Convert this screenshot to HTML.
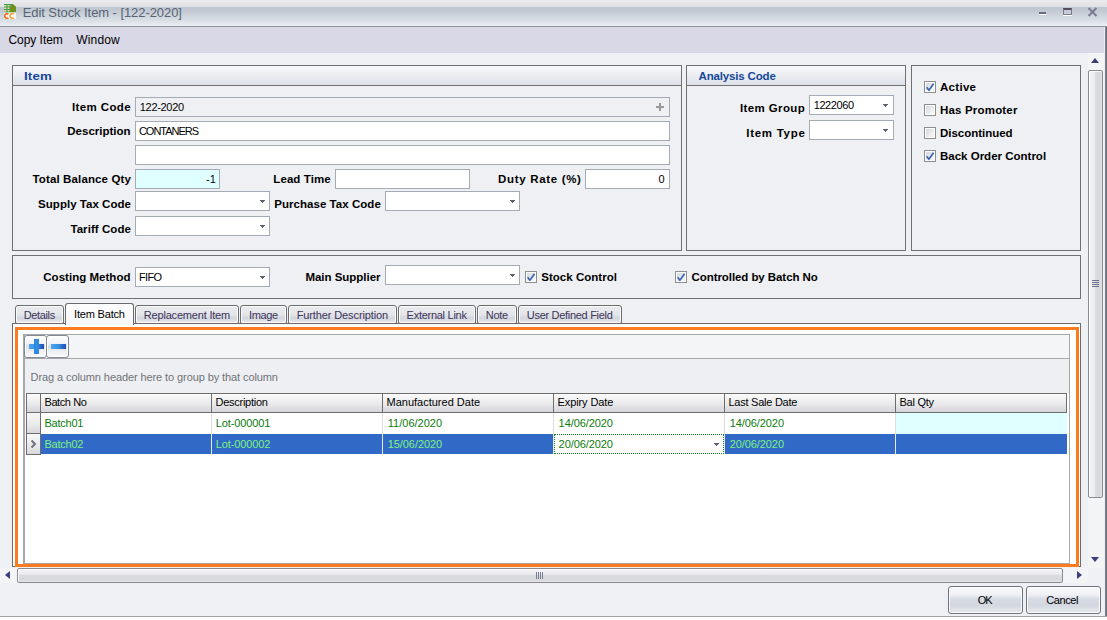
<!DOCTYPE html>
<html><head><meta charset="utf-8">
<style>
*{margin:0;padding:0;box-sizing:border-box}
html,body{width:1107px;height:620px;overflow:hidden;background:#eff0f3;font-family:"Liberation Sans",sans-serif;font-size:11px;color:#000}
.a{position:absolute}
.t{position:absolute;white-space:nowrap;line-height:20px;height:20px}
.grp{position:absolute;border:1px solid #707070;background:#eff0f3}
.gh{position:absolute;left:0;right:0;top:0;height:20px;border-bottom:1px solid #707070;background:linear-gradient(#f8f9fa,#dde1e8)}
.tb{position:absolute;border:1px solid #a4abb4;background:#fff;height:20px}
.dd{position:absolute;width:5px;height:3px}
.cb{position:absolute;width:12px;height:12px;border:1px solid #8e8e8e;background:#fff}
.cb::before{content:"";position:absolute;left:1px;top:1px;width:8px;height:8px;background:linear-gradient(135deg,#d3d8e0,#eef0f2 70%,#f6f6f6)}
.tab{position:absolute;top:305px;height:19px;border:1px solid #6c6c6c;border-radius:3px 3px 2px 2px;box-shadow:inset 0 0 0 1px #fbfbfc;background:linear-gradient(#e9ebee 0%,#e4e6ea 50%,#d2d6de 72%,#e0e2e6 88%,#ececee 100%)}
.tab.sel{top:303px;height:22px;border-bottom:none;border-radius:3px 3px 0 0;box-shadow:none;background:linear-gradient(#fdfdfd,#f6f7f8);z-index:3;border-color:#6c6c6c}
.btn{position:absolute;top:586px;width:75px;height:28px;border:1px solid #6f7380;border-radius:3px;box-shadow:inset 0 0 0 1px rgba(255,255,255,.8);background:linear-gradient(#fafbfc 0%,#eef0f4 30%,#d8dde5 45%,#d3d8e0 70%,#e6e9ee 100%)}
</style></head>
<body>
<div class="a" style="left:0;top:0;width:1107px;height:27px;background:linear-gradient(#e9eaed 0px,#e5e7ea 3px,#dfe1e4 6.5px,#bec6cf 7px,#c3cad3 11px,#cdd3db 15px,#d6dbe2 19px,#dfe3e9 22px,#e9edf3 25px,#eaeef4 26px);border-bottom:1px solid #8d9299"></div>
<svg class="a" style="left:4px;top:4px" width="12" height="15" viewBox="0 0 12 15"><path d="M0 0H9L12 3V15H0Z" fill="#e8d9b0"/><path d="M0 0.5H9M0 3H12M0 5.5H12M0 8H12M3 0V9M6 0V9" stroke="#3f9a4a" stroke-width="1"/><path d="M8 0H9L12 3V8H6V3Z" fill="#6f8f20"/><rect x="0" y="8.5" width="12" height="6.5" fill="#fff"/><path d="M4.5 10.2A2.3 2.3 0 1 0 4.5 13.8" fill="none" stroke="#f06818" stroke-width="1.6"/><path d="M9.8 10.2A2.3 2.3 0 1 0 9.8 13.8" fill="none" stroke="#f0a030" stroke-width="1.6"/></svg>
<div class="t" style="left:22.70px;top:3px;font-size:13px;letter-spacing:-0.069px;color:#586474;">Edit Stock Item - [122-2020]</div>
<div class="a" style="left:1039px;top:12px;width:7px;height:2px;background:#6a6a80;box-shadow:0 1px 0 #fff"></div>
<div class="a" style="left:1063px;top:8px;width:9px;height:7px;border:1px solid #7a7a90;border-top:2px solid #5a4a60;box-shadow:0 1px 0 #fff"></div>
<div class="a" style="left:1087px;top:7px;width:11px;height:10px"><svg width="11" height="10" viewBox="0 0 11 10"><path d="M1.5 1L9.5 9M9.5 1L1.5 9" stroke="#7a7a90" stroke-width="2"/></svg></div>
<div class="a" style="left:0;top:27px;width:1107px;height:26px;background:#d9d8e6"></div>
<div class="t" style="left:8.50px;top:30px;font-size:12px;letter-spacing:-0.050px;">Copy Item</div>
<div class="t" style="left:76.30px;top:30px;font-size:12px;letter-spacing:0.160px;">Window</div>
<div class="grp" style="left:12px;top:65px;width:670px;height:186px"><div class="gh"></div></div>
<div class="grp" style="left:686px;top:65px;width:220px;height:186px"><div class="gh"></div></div>
<div class="grp" style="left:911px;top:65px;width:170px;height:186px"></div>
<div class="grp" style="left:12px;top:255px;width:1069px;height:44px"></div>
<div class="t" style="left:24.10px;top:66px;font-size:11.5px;font-weight:bold;color:#16479a;transform:scaleX(1.16);transform-origin:0 0;letter-spacing:0.1px;">Item</div>
<div class="t" style="left:698.50px;top:66px;font-size:11.5px;font-weight:bold;letter-spacing:-0.163px;color:#16479a;">Analysis Code</div>
<div class="t" style="left:72.00px;top:97px;font-size:11.5px;font-weight:bold;letter-spacing:0.375px;">Item Code</div>
<div class="tb" style="left:135px;top:97px;width:535px;background:#eff0f3"></div>
<div class="t" style="left:139.80px;top:97px;font-size:11px;letter-spacing:-0.314px;">122-2020</div>
<div class="a" style="left:656px;top:103px;width:8px;height:2px;top:106px;background:#999"></div><div class="a" style="left:659px;top:103px;width:2px;height:8px;background:#999"></div>
<div class="t" style="left:67.30px;top:121px;font-size:11.5px;font-weight:bold;">Description</div>
<div class="tb" style="left:135px;top:121px;width:535px"></div>
<div class="t" style="left:138.90px;top:121px;font-size:11px;letter-spacing:-1.006px;">CONTANERS</div>
<div class="tb" style="left:135px;top:145px;width:535px"></div>
<div class="t" style="left:32.50px;top:169px;font-size:11.5px;font-weight:bold;letter-spacing:0.131px;">Total Balance Qty</div>
<div class="tb" style="left:135px;top:169px;width:85px;background:#e0ffff"></div>
<div class="t" style="left:206.00px;top:169px;font-size:11px;">-1</div>
<div class="t" style="left:273.30px;top:169px;font-size:11.5px;font-weight:bold;letter-spacing:0.081px;">Lead Time</div>
<div class="tb" style="left:335px;top:169px;width:135px"></div>
<div class="t" style="left:498.10px;top:169px;font-size:11.5px;font-weight:bold;letter-spacing:0.671px;">Duty Rate (%)</div>
<div class="tb" style="left:585px;top:169px;width:85px"></div>
<div class="t" style="left:658.60px;top:169px;font-size:11px;">0</div>
<div class="t" style="left:38.10px;top:194px;font-size:11.5px;font-weight:bold;letter-spacing:0.025px;">Supply Tax Code</div>
<div class="tb" style="left:135px;top:191px;width:135px"></div><svg class="a dd" style="left:260px;top:200px" width="5" height="3" shape-rendering="crispEdges"><path d="M0 0h5v1h-1v1h-1v1h-1v-1h-1v-1h-1z" fill="#5f6072"/></svg>
<div class="t" style="left:274.20px;top:194px;font-size:11.5px;font-weight:bold;letter-spacing:0.044px;">Purchase Tax Code</div>
<div class="tb" style="left:385px;top:191px;width:135px"></div><svg class="a dd" style="left:510px;top:200px" width="5" height="3" shape-rendering="crispEdges"><path d="M0 0h5v1h-1v1h-1v1h-1v-1h-1v-1h-1z" fill="#5f6072"/></svg>
<div class="t" style="left:70.40px;top:219px;font-size:11.5px;font-weight:bold;letter-spacing:0.065px;">Tariff Code</div>
<div class="tb" style="left:135px;top:216px;width:135px"></div><svg class="a dd" style="left:260px;top:225px" width="5" height="3" shape-rendering="crispEdges"><path d="M0 0h5v1h-1v1h-1v1h-1v-1h-1v-1h-1z" fill="#5f6072"/></svg>
<div class="t" style="left:740.00px;top:98px;font-size:11.5px;font-weight:bold;letter-spacing:0.383px;">Item Group</div>
<div class="tb" style="left:809px;top:95px;width:85px"></div><svg class="a dd" style="left:883px;top:104px" width="5" height="3" shape-rendering="crispEdges"><path d="M0 0h5v1h-1v1h-1v1h-1v-1h-1v-1h-1z" fill="#5f6072"/></svg>
<div class="t" style="left:813.70px;top:95px;font-size:11px;letter-spacing:-0.408px;">1222060</div>
<div class="t" style="left:746.30px;top:123px;font-size:11.5px;font-weight:bold;letter-spacing:0.706px;">Item Type</div>
<div class="tb" style="left:809px;top:120px;width:85px"></div><svg class="a dd" style="left:883px;top:129px" width="5" height="3" shape-rendering="crispEdges"><path d="M0 0h5v1h-1v1h-1v1h-1v-1h-1v-1h-1z" fill="#5f6072"/></svg>
<div class="cb" style="left:924px;top:81px"></div><svg class="a" style="left:925px;top:82px" width="10" height="10"><path d="M1.6 5.2L3.9 8.2L8.6 1.8" fill="none" stroke="#3a62b0" stroke-width="1.7"/></svg>
<div class="t" style="left:940.00px;top:77px;font-size:11.5px;font-weight:bold;letter-spacing:0.300px;">Active</div>
<div class="cb" style="left:924px;top:104px"></div>
<div class="t" style="left:940.00px;top:100px;font-size:11.5px;font-weight:bold;letter-spacing:0.182px;">Has Promoter</div>
<div class="cb" style="left:924px;top:127px"></div>
<div class="t" style="left:940.00px;top:123px;font-size:11.5px;font-weight:bold;letter-spacing:-0.023px;">Discontinued</div>
<div class="cb" style="left:924px;top:150px"></div><svg class="a" style="left:925px;top:151px" width="10" height="10"><path d="M1.6 5.2L3.9 8.2L8.6 1.8" fill="none" stroke="#3a62b0" stroke-width="1.7"/></svg>
<div class="t" style="left:940.00px;top:146px;font-size:11.5px;font-weight:bold;">Back Order Control</div>
<div class="t" style="left:43.30px;top:267px;font-size:11.5px;font-weight:bold;letter-spacing:0.023px;">Costing Method</div>
<div class="tb" style="left:135px;top:267px;width:135px"></div><svg class="a dd" style="left:260px;top:276px" width="5" height="3" shape-rendering="crispEdges"><path d="M0 0h5v1h-1v1h-1v1h-1v-1h-1v-1h-1z" fill="#5f6072"/></svg>
<div class="t" style="left:138.90px;top:267px;font-size:11px;letter-spacing:-0.617px;">FIFO</div>
<div class="t" style="left:305.40px;top:267px;font-size:11.5px;font-weight:bold;letter-spacing:-0.017px;">Main Supplier</div>
<div class="tb" style="left:385px;top:265px;width:135px"></div><svg class="a dd" style="left:510px;top:274px" width="5" height="3" shape-rendering="crispEdges"><path d="M0 0h5v1h-1v1h-1v1h-1v-1h-1v-1h-1z" fill="#5f6072"/></svg>
<div class="cb" style="left:525px;top:271px"></div><svg class="a" style="left:526px;top:272px" width="10" height="10"><path d="M1.6 5.2L3.9 8.2L8.6 1.8" fill="none" stroke="#3a62b0" stroke-width="1.7"/></svg>
<div class="t" style="left:541.20px;top:267px;font-size:11.5px;font-weight:bold;letter-spacing:0.033px;">Stock Control</div>
<div class="cb" style="left:675px;top:271px"></div><svg class="a" style="left:676px;top:272px" width="10" height="10"><path d="M1.6 5.2L3.9 8.2L8.6 1.8" fill="none" stroke="#3a62b0" stroke-width="1.7"/></svg>
<div class="t" style="left:691.50px;top:267px;font-size:11.5px;font-weight:bold;letter-spacing:-0.071px;">Controlled by Batch No</div>
<div class="a" style="left:12px;top:323px;width:1069px;height:244px;border:1px solid #6a6a6a;background:#fff"></div>
<div class="tab" style="left:15px;width:49px"></div>
<div class="t" style="left:23.70px;top:305px;font-size:11px;letter-spacing:-0.350px;color:#3b3358;z-index:4;">Details</div>
<div class="tab sel" style="left:65px;width:69px"></div>
<div class="t" style="left:74.00px;top:304px;font-size:11px;letter-spacing:-0.178px;z-index:4;">Item Batch</div>
<div class="tab" style="left:135px;width:104px"></div>
<div class="t" style="left:143.80px;top:305px;font-size:11px;letter-spacing:-0.190px;color:#3b3358;z-index:4;">Replacement Item</div>
<div class="tab" style="left:240px;width:47px"></div>
<div class="t" style="left:249.00px;top:305px;font-size:11px;letter-spacing:-0.388px;color:#3b3358;z-index:4;">Image</div>
<div class="tab" style="left:288px;width:109px"></div>
<div class="t" style="left:296.70px;top:305px;font-size:11px;letter-spacing:-0.114px;color:#3b3358;z-index:4;">Further Description</div>
<div class="tab" style="left:398px;width:78px"></div>
<div class="t" style="left:406.60px;top:305px;font-size:11px;letter-spacing:-0.271px;color:#3b3358;z-index:4;">External Link</div>
<div class="tab" style="left:477px;width:40px"></div>
<div class="t" style="left:485.70px;top:305px;font-size:11px;letter-spacing:-0.250px;color:#3b3358;z-index:4;">Note</div>
<div class="tab" style="left:518px;width:104px"></div>
<div class="t" style="left:526.80px;top:305px;font-size:11px;letter-spacing:-0.300px;color:#3b3358;z-index:4;">User Defined Field</div>
<div class="a" style="left:15px;top:327px;width:1064px;height:240px;border:3px solid #fd7b1f"></div>
<div class="a" style="left:23px;top:334px;width:1047px;height:230px;border:1px solid #a8a8a8;border-left-width:2px;background:#fff"></div>
<div class="a" style="left:25px;top:335px;width:1044px;height:24px;background:#f4f5f7;border-bottom:1px solid #a8a8a8"></div>
<div class="a" style="left:24px;top:335px;width:23px;height:23px;border:1px solid #858a98;border-radius:3px;box-shadow:inset 0 0 0 1px #fff;background:linear-gradient(#fdfdfe 0%,#f0f2f5 35%,#d9dde5 50%,#eef0f3 75%,#fbfbfc 100%)"></div>
<div class="a" style="left:46px;top:335px;width:23px;height:23px;border:1px solid #858a98;border-radius:3px;box-shadow:inset 0 0 0 1px #fff;background:linear-gradient(#fdfdfe 0%,#f0f2f5 35%,#d9dde5 50%,#eef0f3 75%,#fbfbfc 100%)"></div>
<div class="a" style="left:29px;top:344px;width:15px;height:5px;background:linear-gradient(90deg,#4aa6ee,#3590e2 50%,#2a64c4 80%,#2350a8)"></div>
<div class="a" style="left:34px;top:339px;width:5px;height:15px;background:#2f8be0"></div>
<div class="a" style="left:51px;top:344px;width:15px;height:5px;background:linear-gradient(90deg,#4aa6ee,#3590e2 50%,#2a64c4 80%,#2350a8)"></div>
<div class="a" style="left:25px;top:359px;width:1044px;height:34px;background:#eeeff2"></div>
<div class="t" style="left:30.60px;top:367px;font-size:11px;letter-spacing:-0.095px;color:#6e7378;">Drag a column header here to group by that column</div>
<div class="a" style="left:26px;top:393px;width:1041px;height:20px;border:1px solid #6d6d6d;background:linear-gradient(#fbfbfb,#e8e8ea 60%,#d6d6da)"></div>
<div class="a" style="left:40px;top:394px;width:1px;height:18px;background:#6d6d6d"></div>
<div class="a" style="left:211px;top:394px;width:1px;height:18px;background:#6d6d6d"></div>
<div class="a" style="left:382px;top:394px;width:1px;height:18px;background:#6d6d6d"></div>
<div class="a" style="left:553px;top:394px;width:1px;height:18px;background:#6d6d6d"></div>
<div class="a" style="left:724px;top:394px;width:1px;height:18px;background:#6d6d6d"></div>
<div class="a" style="left:895px;top:394px;width:1px;height:18px;background:#6d6d6d"></div>
<div class="t" style="left:44.50px;top:392px;font-size:11px;letter-spacing:-0.421px;">Batch No</div>
<div class="t" style="left:215.50px;top:392px;font-size:11px;letter-spacing:-0.260px;">Description</div>
<div class="t" style="left:386.50px;top:392px;font-size:11px;">Manufactured Date</div>
<div class="t" style="left:557.50px;top:392px;font-size:11px;letter-spacing:-0.095px;">Expiry Date</div>
<div class="t" style="left:728.50px;top:392px;font-size:11px;letter-spacing:-0.250px;">Last Sale Date</div>
<div class="t" style="left:899.50px;top:392px;font-size:11px;letter-spacing:-0.242px;">Bal Qty</div>
<div class="a" style="left:26px;top:412px;width:15px;height:22px;border:1px solid #6d6d6d;background:linear-gradient(#f7f7f8,#e9e9eb 60%,#d8d8db)"></div>
<div class="a" style="left:26px;top:433px;width:15px;height:22px;border:1px solid #6d6d6d;background:linear-gradient(#f7f7f8,#e9e9eb 60%,#d8d8db)"></div>
<div class="a" style="left:41px;top:413px;width:1026px;height:21px;background:#fff"></div>
<div class="a" style="left:896px;top:413px;width:171px;height:21px;background:#e0ffff"></div>
<div class="a" style="left:41px;top:434px;width:1026px;height:20px;background:#3169c6"></div>
<div class="a" style="left:211px;top:413px;width:1px;height:21px;background:#dcdcdc"></div>
<div class="a" style="left:211px;top:434px;width:1px;height:20px;background:#e8e8f0"></div>
<div class="a" style="left:382px;top:413px;width:1px;height:21px;background:#dcdcdc"></div>
<div class="a" style="left:382px;top:434px;width:1px;height:20px;background:#e8e8f0"></div>
<div class="a" style="left:553px;top:413px;width:1px;height:21px;background:#dcdcdc"></div>
<div class="a" style="left:553px;top:434px;width:1px;height:20px;background:#e8e8f0"></div>
<div class="a" style="left:724px;top:413px;width:1px;height:21px;background:#dcdcdc"></div>
<div class="a" style="left:724px;top:434px;width:1px;height:20px;background:#e8e8f0"></div>
<div class="a" style="left:895px;top:413px;width:1px;height:21px;background:#dcdcdc"></div>
<div class="a" style="left:895px;top:434px;width:1px;height:20px;background:#e8e8f0"></div>
<div class="a" style="left:554px;top:434px;width:170px;height:20px;background:#fff;border:1px dotted #1a8a1a"></div>
<svg class="a dd" style="left:714px;top:443px" width="5" height="3" shape-rendering="crispEdges"><path d="M0 0h5v1h-1v1h-1v1h-1v-1h-1v-1h-1z" fill="#5f6072"/></svg>
<div class="t" style="left:44.50px;top:413px;font-size:11px;letter-spacing:-0.242px;color:#0c7c0c;">Batch01</div>
<div class="t" style="left:215.80px;top:413px;font-size:11px;letter-spacing:-0.117px;color:#0c7c0c;">Lot-000001</div>
<div class="t" style="left:387.80px;top:413px;font-size:11px;color:#0c7c0c;">11/06/2020</div>
<div class="t" style="left:558.60px;top:413px;font-size:11px;letter-spacing:-0.083px;color:#0c7c0c;">14/06/2020</div>
<div class="t" style="left:729.70px;top:413px;font-size:11px;letter-spacing:-0.083px;color:#0c7c0c;">14/06/2020</div>
<div class="t" style="left:44.50px;top:434px;font-size:11px;letter-spacing:-0.242px;color:#7df27d;">Batch02</div>
<div class="t" style="left:215.80px;top:434px;font-size:11px;letter-spacing:-0.117px;color:#7df27d;">Lot-000002</div>
<div class="t" style="left:387.80px;top:434px;font-size:11px;letter-spacing:-0.083px;color:#7df27d;">15/06/2020</div>
<div class="t" style="left:558.60px;top:434px;font-size:11px;letter-spacing:-0.083px;color:#0c7c0c;">20/06/2020</div>
<div class="t" style="left:729.70px;top:434px;font-size:11px;letter-spacing:-0.083px;color:#7df27d;">20/06/2020</div>
<div class="a" style="left:30px;top:439px;width:7px;height:10px"><svg width="7" height="10"><path d="M1.5 1.5L5 5L1.5 8.5" fill="none" stroke="#6d6d78" stroke-width="1.8"/></svg></div>
<div class="a" style="left:1088px;top:53px;width:16px;height:515px;background:#f3f4f6"></div>
<div class="a" style="left:1091px;top:58px;width:0;height:0;border-left:4.5px solid transparent;border-right:4.5px solid transparent;border-bottom:5px solid #3c3c78"></div>
<div class="a" style="left:1091px;top:557px;width:0;height:0;border-left:4.5px solid transparent;border-right:4.5px solid transparent;border-top:5px solid #3c3c78"></div>
<div class="a" style="left:1088px;top:70px;width:15px;height:428px;border:1px solid #8a8a8e;border-radius:2px;box-shadow:inset 1px 1px 0 #fff;background:linear-gradient(90deg,#f2f2f4,#ececef 45%,#d9dbdf 50%,#d6d8dc 85%,#e6e7ea)"></div>
<div class="a" style="left:1092px;top:280px;width:7px;height:1px;background:#6a6f8c"></div>
<div class="a" style="left:1092px;top:282px;width:7px;height:1px;background:#6a6f8c"></div>
<div class="a" style="left:1092px;top:284px;width:7px;height:1px;background:#6a6f8c"></div>
<div class="a" style="left:1092px;top:286px;width:7px;height:1px;background:#6a6f8c"></div>
<div class="a" style="left:1104px;top:27px;width:1px;height:589px;background:#eceef1"></div><div class="a" style="left:1105px;top:27px;width:2px;height:589px;background:linear-gradient(90deg,#8a8d96,#60636e)"></div>
<div class="a" style="left:0;top:568px;width:1088px;height:15px;background:#f3f4f6"></div>
<div class="a" style="left:5px;top:571px;width:0;height:0;border-top:4.5px solid transparent;border-bottom:4.5px solid transparent;border-right:5px solid #3c3c78"></div>
<div class="a" style="left:1077px;top:571px;width:0;height:0;border-top:4.5px solid transparent;border-bottom:4.5px solid transparent;border-left:5px solid #3c3c78"></div>
<div class="a" style="left:17px;top:568px;width:1046px;height:15px;border:1px solid #8a8a8e;border-radius:2px;box-shadow:inset 1px 1px 0 #fff;background:linear-gradient(#f2f2f4,#ececef 40%,#d9dbdf 48%,#d6d8dc 85%,#e6e7ea)"></div>
<div class="a" style="left:536px;top:572px;width:1px;height:7px;background:#767b96"></div>
<div class="a" style="left:538px;top:572px;width:1px;height:7px;background:#767b96"></div>
<div class="a" style="left:540px;top:572px;width:1px;height:7px;background:#767b96"></div>
<div class="a" style="left:542px;top:572px;width:1px;height:7px;background:#767b96"></div>
<div class="btn" style="left:948px"></div><div class="btn" style="left:1026px"></div>
<div class="t" style="left:977.70px;top:590px;font-size:11px;letter-spacing:-1.100px;">OK</div>
<div class="t" style="left:1046.30px;top:590px;font-size:11px;letter-spacing:-0.410px;">Cancel</div>
<div class="a" style="left:0;top:616px;width:1107px;height:1px;background:#a0a2a8"></div>
<div class="a" style="left:0;top:617px;width:1107px;height:3px;background:#fff"></div>
</body></html>
